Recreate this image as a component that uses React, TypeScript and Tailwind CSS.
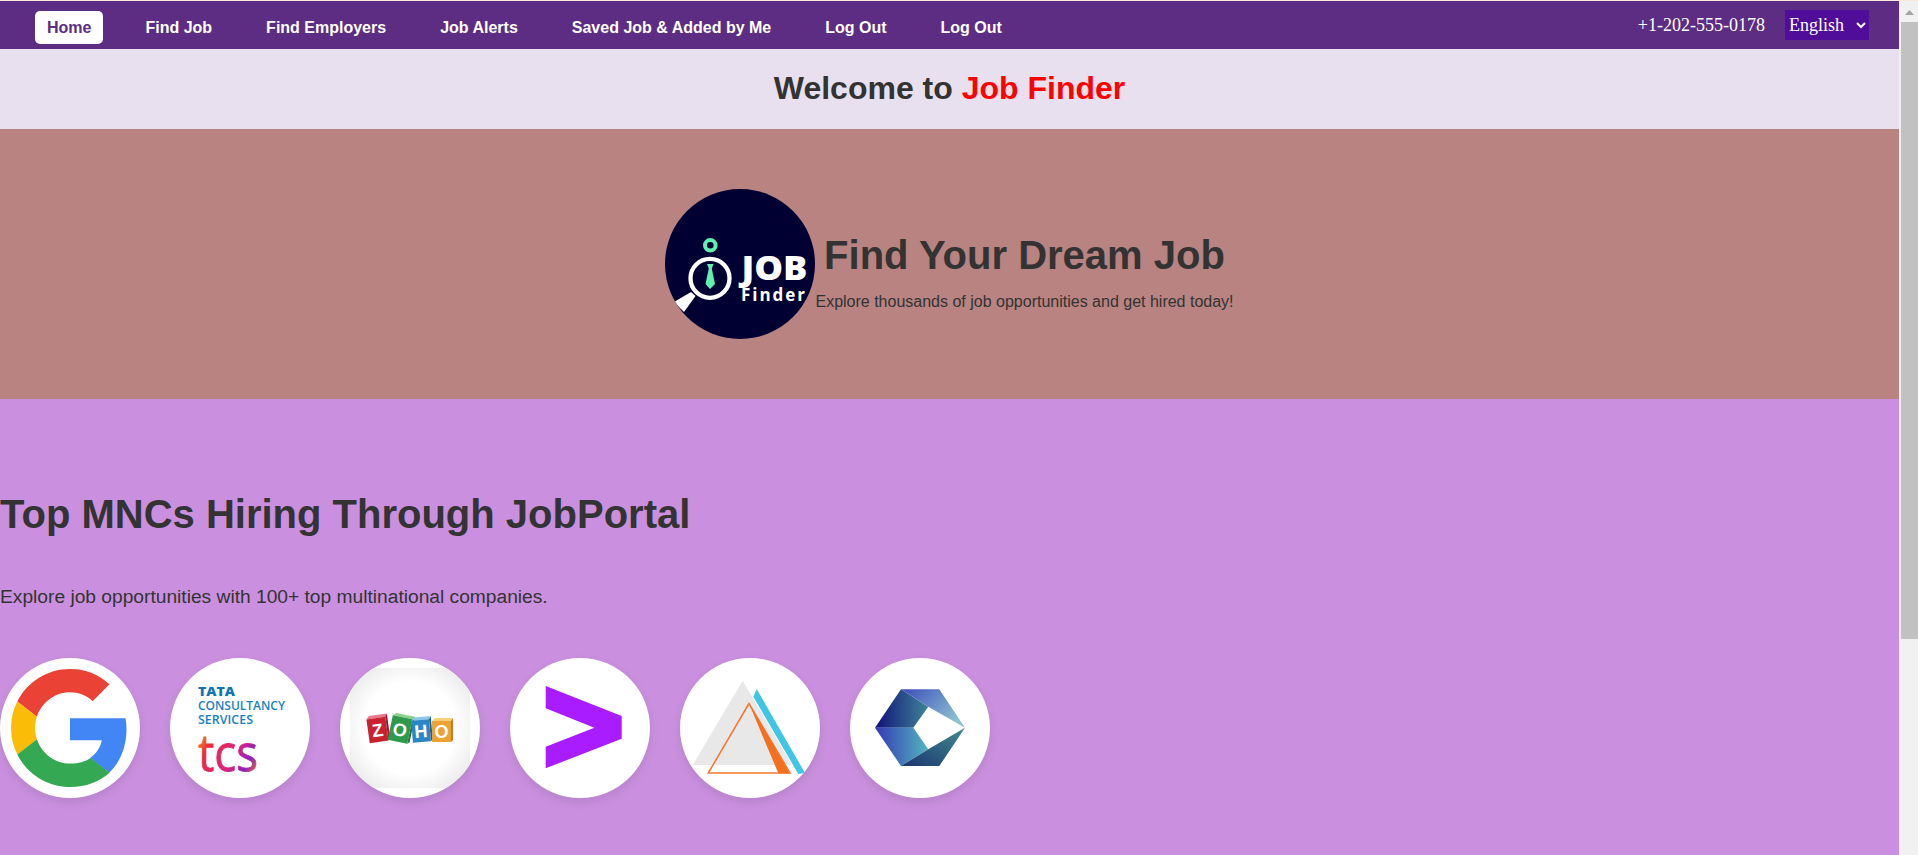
const navLinks = ['Find Job', 'Find Employers', 'Job Alerts', 'Saved Job & Added by Me', 'Log Out', 'Log Out']

function GoogleLogo() {
  return (
    <svg viewBox="0 0 48 48" className="h-[120px] w-[118px]">
      <path fill="#EA4335" d="M24 9.5c3.54 0 6.71 1.22 9.21 3.6l6.85-6.85C35.9 2.38 30.47 0 24 0 14.62 0 6.51 5.38 2.56 13.22l7.98 6.19C12.43 13.72 17.74 9.5 24 9.5z" />
      <path fill="#4285F4" d="M46.98 24.55c0-1.57-.15-3.09-.38-4.55H24v9.02h12.94c-.58 2.96-2.26 5.48-4.78 7.18l7.73 6c4.51-4.18 7.09-10.36 7.09-17.65z" />
      <path fill="#FBBC05" d="M10.53 28.59c-.5-1.45-.78-2.99-.78-4.59s.27-3.14.76-4.59l-7.98-6.19C.92 16.46 0 20.12 0 24c0 3.88.92 7.54 2.56 10.78l7.97-6.19z" />
      <path fill="#34A853" d="M24 48c6.48 0 11.93-2.13 16.08-5.81l-7.73-6c-2.15 1.45-4.92 2.3-8.35 2.3-6.26 0-11.57-4.22-13.47-9.91l-7.98 6.19C6.51 42.62 14.62 48 24 48z" />
    </svg>
  )
}

function TcsLogo() {
  return (
    <svg viewBox="0 0 140 140" className="h-[140px] w-[140px]">
      <defs>
        <linearGradient id="tcsGrad" gradientUnits="userSpaceOnUse" x1="28" y1="78" x2="88" y2="112">
          <stop offset="0" stopColor="#f39a1f" />
          <stop offset="0.2" stopColor="#ee2a3c" />
          <stop offset="0.6" stopColor="#d9237f" />
          <stop offset="0.82" stopColor="#8c1fc4" />
          <stop offset="1" stopColor="#f0682c" />
        </linearGradient>
      </defs>
      <g fontFamily="'Open Sans', sans-serif" fill="#1a7fbf">
        <text x="28" y="38" fontSize="12" fontWeight="800" fill="#0f75b5" textLength="37" lengthAdjust="spacingAndGlyphs">TATA</text>
        <text x="28" y="52" fontSize="12.5" fontWeight="600" textLength="87" lengthAdjust="spacingAndGlyphs">CONSULTANCY</text>
        <text x="28" y="65.5" fontSize="12.5" fontWeight="600" textLength="55" lengthAdjust="spacingAndGlyphs">SERVICES</text>
      </g>
      <text
        x="28"
        y="113"
        fontFamily="'Open Sans', sans-serif"
        fontSize="52"
        fontWeight="500"
        fill="url(#tcsGrad)"
        stroke="url(#tcsGrad)"
        strokeWidth="0.8"
        textLength="60"
        lengthAdjust="spacingAndGlyphs"
      >
        tcs
      </text>
    </svg>
  )
}

function ZohoLogo() {
  const tiles = [
    { x: 28, y: 60, w: 19, h: 24, fill: '#c8212f', top: '#e8788a', side: '#96182a', letter: 'Z', r: -8 },
    { x: 50, y: 59, w: 20, h: 25, fill: '#2f9a4c', top: '#8fd08c', side: '#21713a', letter: 'O', r: 12 },
    { x: 72, y: 62, w: 18, h: 22, fill: '#2a86c6', top: '#8cc6ea', side: '#1c639a', letter: 'H', r: -5 },
    { x: 92, y: 63, w: 19, h: 21, fill: '#eda233', top: '#f6d27c', side: '#c47d1f', letter: 'O', r: 0 },
  ]
  return (
    <svg viewBox="0 0 140 140" className="h-[140px] w-[140px]">
      <defs>
        <radialGradient id="zohoBg" cx="0.5" cy="0.5" r="0.7">
          <stop offset="0.55" stopColor="#ffffff" />
          <stop offset="1" stopColor="#e2e2e2" />
        </radialGradient>
      </defs>
      <rect x="10" y="10" width="120" height="120" fill="url(#zohoBg)" />
      {tiles.map((t, i) => (
        <g key={i} transform={`rotate(${t.r} ${t.x + t.w / 2} ${t.y + t.h / 2})`}>
          <polygon fill={t.top} points={`${t.x},${t.y} ${t.x + 3},${t.y - 3} ${t.x + t.w + 2},${t.y - 3} ${t.x + t.w},${t.y}`} />
          <polygon fill={t.side} points={`${t.x + t.w},${t.y} ${t.x + t.w + 2},${t.y - 3} ${t.x + t.w + 2},${t.y + t.h - 2} ${t.x + t.w},${t.y + t.h}`} />
          <rect x={t.x} y={t.y} width={t.w} height={t.h} fill={t.fill} />
          <text
            x={t.x + t.w / 2}
            y={t.y + t.h / 2 + 6.5}
            textAnchor="middle"
            fontFamily="'Liberation Sans', sans-serif"
            fontSize="18"
            fontWeight="700"
            fill="#ffffff"
          >
            {t.letter}
          </text>
        </g>
      ))}
    </svg>
  )
}

function AccentureLogo() {
  return (
    <svg viewBox="0 0 140 140" className="h-[140px] w-[140px]">
      <polygon fill="#a91cff" points="35.7,28 111.7,58 111.7,80.7 35.7,110.3 35.7,88.7 84.3,69.7 35.7,50.3" />
    </svg>
  )
}

function TriangleLogo() {
  return (
    <svg viewBox="0 0 140 140" className="h-[140px] w-[140px]">
      <polygon fill="#e8e8e8" points="62.7,22.7 12.7,107 112,107" />
      <polygon fill="#41c5e5" points="76.7,31 73.3,38.7 118.3,116 125,115" />
      <polygon fill="none" stroke="#f47a33" strokeWidth="1.6" points="69,45.5 28.3,115 110,115" />
      <polygon fill="#f4701f" points="69,45.5 110,115.6 98.5,115.6" />
    </svg>
  )
}

function HexLogo() {
  return (
    <svg viewBox="0 0 140 140" className="h-[140px] w-[140px]">
      <defs>
        <linearGradient id="hexA" x1="0" y1="0" x2="1" y2="0">
          <stop offset="0" stopColor="#12107c" />
          <stop offset="1" stopColor="#3d8596" />
        </linearGradient>
        <linearGradient id="hexB" x1="0" y1="0" x2="1" y2="0.6">
          <stop offset="0" stopColor="#3b4cbb" />
          <stop offset="1" stopColor="#8cc2d2" />
        </linearGradient>
        <linearGradient id="hexC" x1="0" y1="0" x2="1" y2="0">
          <stop offset="0" stopColor="#3538b4" />
          <stop offset="1" stopColor="#52b6bf" />
        </linearGradient>
        <linearGradient id="hexD" x1="0" y1="1" x2="1" y2="0">
          <stop offset="0" stopColor="#1c3570" />
          <stop offset="1" stopColor="#3f8a90" />
        </linearGradient>
      </defs>
      <polygon fill="url(#hexA)" points="51,31.3 25,69.7 63.3,69.7 78.3,48.7" />
      <polygon fill="url(#hexB)" points="51,31.3 89.3,31.3 115,69.7 78.3,48.7" />
      <polygon fill="url(#hexC)" points="25,69.7 63.3,69.7 78.3,91.3 51,108" />
      <polygon fill="url(#hexD)" points="51,108 89.3,108 115,69.7 78.3,91.3" />
    </svg>
  )
}

function JobFinderLogo() {
  return (
    <svg viewBox="0 0 150 150" className="h-[150px] w-[150px] shrink-0 rounded-full">
      <rect width="150" height="150" fill="#000033" />
      <circle cx="45.3" cy="56.3" r="5.3" fill="none" stroke="#5ff0b0" strokeWidth="4" />
      <circle cx="45" cy="89.3" r="19.5" fill="none" stroke="#ffffff" strokeWidth="4.3" />
      <polygon fill="#5ff0b0" points="42,75 48.5,75 46.8,79.5 50,95 45,100 40.5,95 43.8,79.5" />
      <polygon fill="#ffffff" points="26,103 30.5,107 19,123 9,113" />
      <text x="76.5" y="91" fontFamily="'Open Sans', sans-serif" fontSize="33" fontWeight="800" fill="#ffffff" textLength="66" lengthAdjust="spacingAndGlyphs">JOB</text>
      <text x="76" y="111.5" fontFamily="'Open Sans', sans-serif" fontSize="17" fontWeight="700" fill="#ffffff" textLength="64">Finder</text>
    </svg>
  )
}

function Scrollbar() {
  return (
    <div className="flex w-[19px] shrink-0 flex-col bg-[#f1f1f1] pl-[2px]">
      <div className="flex h-[21px] shrink-0 items-center justify-center pt-px">
        <svg viewBox="0 0 9 5" className="h-[5px] w-[9px]">
          <polygon points="4.5,0 9,5 0,5" fill="#a3a3a3" />
        </svg>
      </div>
      <div className="h-[617px] w-[17px] bg-[#c1c1c1]" />
    </div>
  )
}

export default function App() {
  const logos = [<GoogleLogo />, <TcsLogo />, <ZohoLogo />, <AccentureLogo />, <TriangleLogo />, <HexLogo />]

  return (
    <div className="flex h-[855px] w-full overflow-hidden bg-[#fbeadb] pt-px font-['Liberation_Sans',Arial,sans-serif]">
      <div className="flex min-w-0 flex-1 flex-col">
        <nav className="flex h-12 shrink-0 items-center justify-between bg-[#5c2d82] pl-[35px] pr-[30px]">
          <div className="flex items-center gap-[30px] pt-[5px]">
            <a className="flex h-[33px] items-center rounded-[5px] bg-white px-3 text-base font-bold text-[#5c2d82]">Home</a>
            {navLinks.map((label, i) => (
              <a key={i} className="flex h-[33px] items-center px-3 text-base font-bold text-white">
                {label}
              </a>
            ))}
          </div>
          <div className="flex items-center gap-5 font-['Liberation_Serif',serif] text-lg text-white">
            <span>+1-202-555-0178</span>
            <select className="h-[30px] w-[84px] bg-[#4f0d99] text-lg text-white">
              <option>English</option>
            </select>
          </div>
        </nav>

        <div className="flex h-20 shrink-0 items-center justify-center bg-[#e8e0ee] pb-[2px] text-[32px] font-bold text-[#333333]">
          <h1>
            Welcome to <span className="text-[#ff0000]">Job Finder</span>
          </h1>
        </div>

        <section className="flex h-[270px] shrink-0 items-center justify-center bg-[#b98381]">
          <JobFinderLogo />
          <div className="flex flex-col items-center pt-[14px] text-[#333333]">
            <h2 className="text-[40px] font-bold leading-[46px]">Find Your Dream Job</h2>
            <p className="mt-[15px] text-base leading-[18px]">Explore thousands of job opportunities and get hired today!</p>
          </div>
        </section>

        <section className="flex-1 bg-[#ca90df] pt-[92px] text-[#333333]">
          <h2 className="text-[40px] font-bold leading-[46px]">Top MNCs Hiring Through JobPortal</h2>
          <p className="mt-[49px] text-[19.2px] leading-[22px]">Explore job opportunities with 100+ top multinational companies.</p>
          <div className="mt-[50px] flex gap-[30px]">
            {logos.map((logo, i) => (
              <div
                key={i}
                className="flex h-[140px] w-[140px] items-center justify-center overflow-hidden rounded-full bg-white shadow-[0_4px_10px_rgba(0,0,0,0.1)]"
              >
                {logo}
              </div>
            ))}
          </div>
        </section>
      </div>
      <Scrollbar />
    </div>
  )
}
